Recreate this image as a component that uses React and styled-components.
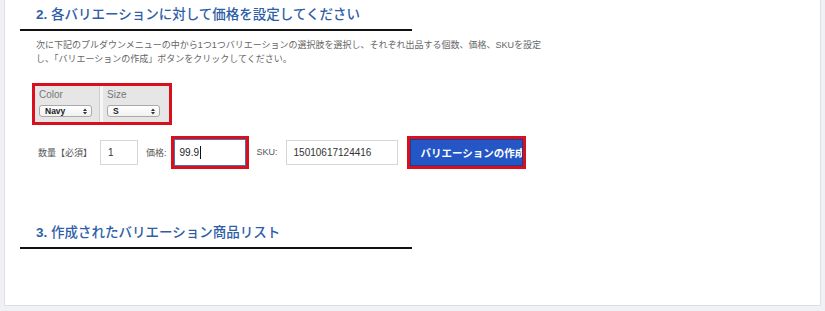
import React from "react";
import styled, { createGlobalStyle } from "styled-components";

const GlobalStyle = createGlobalStyle`
  html, body {
    margin: 0;
    padding: 0;
    background: #eff1f4;
    font-family: "Liberation Sans", "Noto Sans CJK JP", sans-serif;
  }
`;

const Panel = styled.div`
  box-sizing: border-box;
  margin-left: 4px;
  width: 817px;
  height: 306px;
  background: #fff;
  border: 1px solid #dcdfe3;
  border-top: none;
  padding: 0 15px;
  display: flex;
  flex-direction: column;
`;

const SectionTitle = styled.h2`
  margin: ${(p) => p.$top || 0}px 0 0;
  width: 392px;
  padding: 6px 0 5px 16px;
  box-sizing: border-box;
  font-size: 13.5px;
  line-height: 18px;
  font-weight: 500;
  color: #2f5ea8;
  border-bottom: 2px solid #111;
  white-space: nowrap;
`;

const Num = styled.span`
  font-weight: 700;
`;

const Intro = styled.div`
  margin-top: 7px;
  padding-left: 16px;
  font-size: 9px;
  line-height: 14px;
  color: #666;
  span {
    display: block;
    white-space: nowrap;
  }
`;

const VariantBox = styled.div`
  margin: 17px 0 0 12px;
  width: 140px;
  height: 42px;
  box-sizing: border-box;
  border: 3px solid #d8101e;
  background: #e6e6e6;
  display: flex;
`;

const VariantCell = styled.div`
  width: ${(p) => p.$w}px;
  box-sizing: border-box;
  padding: 3px 0 0 4px;
  border-right: ${(p) => (p.$divider ? "1px solid #cfcfcf" : "none")};
  border-left: ${(p) => (p.$edge ? "3px solid #f6f6f6" : "none")};
`;

const VariantLabel = styled.div`
  font-size: 10px;
  line-height: 12px;
  color: #777;
`;

const FakeSelect = styled.div`
  margin-top: 4px;
  width: 53px;
  height: 12px;
  box-sizing: border-box;
  border: 1px solid #a9a9a9;
  border-radius: 3px;
  background: linear-gradient(#ffffff, #f1f1f1);
  display: flex;
  align-items: center;
  justify-content: space-between;
  padding: 0 4px 0 5px;
  font-size: 8.5px;
  font-weight: 700;
  color: #222;
`;

const Row = styled.div`
  margin: 9px 0 0 18px;
  height: 36px;
  display: flex;
  align-items: center;
`;

const FieldLabel = styled.span`
  font-size: 9px;
  color: #555;
  margin-left: ${(p) => p.$ml || 0}px;
  white-space: nowrap;
`;

const TextBox = styled.div`
  margin-left: ${(p) => p.$ml || 0}px;
  width: ${(p) => p.$w}px;
  height: 25px;
  box-sizing: border-box;
  border: 1px solid #d6d6d6;
  padding-left: ${(p) => p.$pl || 7}px;
  display: flex;
  align-items: center;
  font-size: 10px;
  color: #333;
`;

const FocusBox = styled.div`
  margin-left: 4px;
  width: 78px;
  height: 33px;
  box-sizing: border-box;
  border: 3px solid #d8101e;
  display: flex;
`;

const FocusInner = styled.div`
  flex: 1;
  border: 1px solid #4a73b5;
  padding-left: 5px;
  display: flex;
  align-items: center;
  font-size: 10px;
  color: #222;
`;

const Caret = styled.span`
  display: inline-block;
  width: 1px;
  height: 13px;
  background: #111;
  margin-left: 1px;
`;

const CreateButton = styled.button`
  margin-left: 9px;
  width: 119px;
  height: 33px;
  box-sizing: border-box;
  border: 3px solid #d8101e;
  padding: 0;
  background: #fff;
  display: flex;
  cursor: pointer;
`;

const ButtonFace = styled.div`
  flex: 1;
  background: #2456c6;
  border: 1px solid #1a3e96;
  overflow: hidden;
  display: flex;
  align-items: center;
  padding-left: 10px;
  color: #fff;
  font-family: "Liberation Sans", "Noto Sans CJK JP", sans-serif;
  font-size: 10.5px;
  font-weight: 700;
  white-space: nowrap;
`;

const Arrows = () => (
  <svg width="4" height="7" viewBox="0 0 4 7">
    <path d="M0 3 L2 0.5 L4 3 Z M0 4 L2 6.5 L4 4 Z" fill="#333" />
  </svg>
);

export default function App() {
  return (
    <>
      <GlobalStyle />
      <Panel>
        <SectionTitle>
          <Num>2.</Num> 各バリエーションに対して価格を設定してください
        </SectionTitle>
        <Intro>
          <span>次に下記のプルダウンメニューの中から1つ1つバリエーションの選択肢を選択し、それぞれ出品する個数、価格、SKUを設定</span>
          <span>し、「バリエーションの作成」ボタンをクリックしてください。</span>
        </Intro>
        <VariantBox>
          <VariantCell $w={65} $divider>
            <VariantLabel>Color</VariantLabel>
            <FakeSelect>
              Navy <Arrows />
            </FakeSelect>
          </VariantCell>
          <VariantCell $w={69} $edge>
            <VariantLabel>Size</VariantLabel>
            <FakeSelect>
              S <Arrows />
            </FakeSelect>
          </VariantCell>
        </VariantBox>
        <Row>
          <FieldLabel>数量【必須】</FieldLabel>
          <TextBox $ml={8} $w={38}>1</TextBox>
          <FieldLabel $ml={8}>価格:</FieldLabel>
          <FocusBox>
            <FocusInner>
              99.9<Caret />
            </FocusInner>
          </FocusBox>
          <FieldLabel $ml={8}>SKU:</FieldLabel>
          <TextBox $ml={8} $w={112}>15010617124416</TextBox>
          <CreateButton>
            <ButtonFace>バリエーションの作成</ButtonFace>
          </CreateButton>
        </Row>
        <SectionTitle $top={48}>
          <Num>3.</Num> 作成されたバリエーション商品リスト
        </SectionTitle>
      </Panel>
    </>
  );
}
